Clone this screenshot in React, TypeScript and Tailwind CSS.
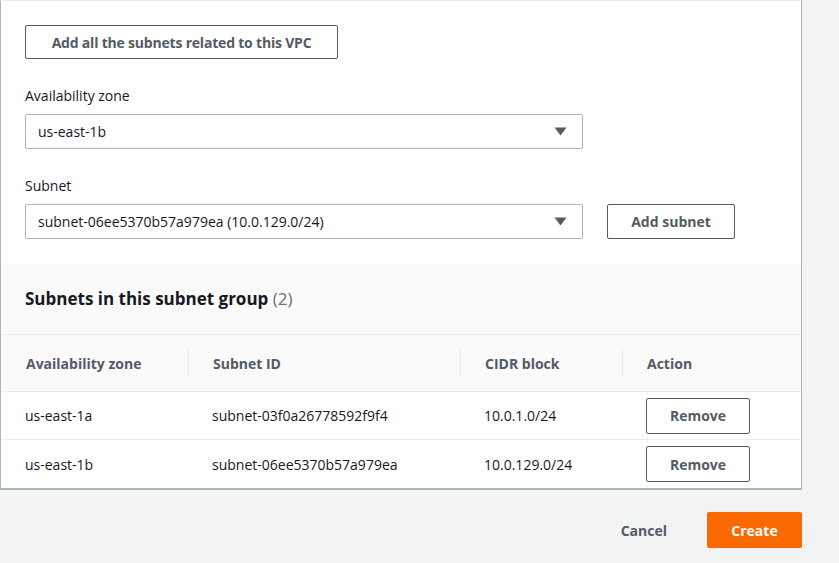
import React from "react";

const Caret = () => (
  <svg width="13" height="9" viewBox="0 0 13 9" className="shrink-0">
    <path d="M0.5 0.5 H12.5 L6.5 8.5 Z" fill="#545b64" />
  </svg>
);

const Select = ({ value }: { value: string }) => (
  <div className="w-[558px] h-[35px] border border-[#aab7b8] rounded-[2px] flex items-center justify-between pl-[12px] pr-[15px] text-[14px] text-[#16191f]">
    <span>{value}</span>
    <Caret />
  </div>
);

const rows = [
  { az: "us-east-1a", id: "subnet-03f0a26778592f9f4", cidr: "10.0.1.0/24" },
  { az: "us-east-1b", id: "subnet-06ee5370b57a979ea", cidr: "10.0.129.0/24" },
];

export default function App() {
  return (
    <div
      className="w-[839px] h-[563px] bg-[#f2f3f3] overflow-hidden"
      style={{ fontFamily: '"Open Sans", "Noto Sans", Arial, sans-serif' }}
    >
      <div className="w-[802px] bg-white border-l border-r border-t border-t-[#eaeded] border-l-[#aab7b8] border-r-[#aab7b8] border-b-2 border-b-[#aab7b8]">
        <div className="px-[24px] pt-[24px] pb-[25px]">
          <button className="h-[34px] w-[313px] border border-[#545b64] rounded-[2px] text-[14px] font-bold text-[#545b64] tracking-[-0.2px]">
            Add all the subnets related to this VPC
          </button>
          <div className="mt-[26px] mb-[7px] h-[22px] leading-[22px] text-[14px] text-[#16191f]">
            Availability zone
          </div>
          <Select value="us-east-1b" />
          <div className="mt-[26px] mb-[7px] h-[22px] leading-[22px] text-[14px] text-[#16191f]">
            Subnet
          </div>
          <div className="flex items-center gap-[24px]">
            <Select value="subnet-06ee5370b57a979ea (10.0.129.0/24)" />
            <button className="h-[35px] w-[128px] border border-[#545b64] rounded-[2px] text-[14px] font-bold text-[#545b64]">
              Add subnet
            </button>
          </div>
        </div>
        <div className="bg-[#fafafa] h-[71px] flex items-center px-[24px] border-b border-[#eaeded]">
          <span className="text-[17px] font-bold text-[#16191f]">
            Subnets in this subnet group{" "}
            <span className="font-normal text-[#687078]">(2)</span>
          </span>
        </div>
        <div className="grid grid-cols-[187px_272px_162px_1fr] text-[14px]">
          <div className="bg-[#fafafa] h-[57px] flex items-center pl-[25px] font-bold text-[#545b64] border-b border-[#eaeded]">
            Availability zone
          </div>
          {["Subnet ID", "CIDR block", "Action"].map((h) => (
            <div key={h} className="bg-[#fafafa] h-[57px] flex items-center font-bold text-[#545b64] border-b border-[#eaeded]">
              <span className="w-px h-[28px] bg-[#eaeded]" />
              <span className="pl-[24px]">{h}</span>
            </div>
          ))}
          {rows.map((r, i) => (
            <React.Fragment key={r.id}>
              <div className={`h-[48px] flex items-center pl-[24px] text-[#16191f] ${i === 0 ? "border-b border-[#eaeded]" : ""}`}>
                {r.az}
              </div>
              <div className={`h-[48px] flex items-center pl-[24px] text-[#16191f] ${i === 0 ? "border-b border-[#eaeded]" : ""}`}>
                {r.id}
              </div>
              <div className={`h-[48px] flex items-center pl-[24px] text-[#16191f] ${i === 0 ? "border-b border-[#eaeded]" : ""}`}>
                {r.cidr}
              </div>
              <div className={`h-[48px] flex items-center pl-[24px] ${i === 0 ? "border-b border-[#eaeded]" : ""}`}>
                <button className="h-[36px] w-[104px] border border-[#545b64] rounded-[2px] font-bold text-[#545b64]">
                  Remove
                </button>
              </div>
            </React.Fragment>
          ))}
        </div>
      </div>
      <div className="w-[802px] flex justify-end items-center gap-[20px] mt-[22px]">
        <button className="h-[36px] px-[20px] text-[14px] font-bold text-[#545b64]">Cancel</button>
        <button className="h-[36px] w-[95px] rounded-[2px] bg-[#fa6800] text-white text-[14px] font-bold">
          Create
        </button>
      </div>
    </div>
  );
}
